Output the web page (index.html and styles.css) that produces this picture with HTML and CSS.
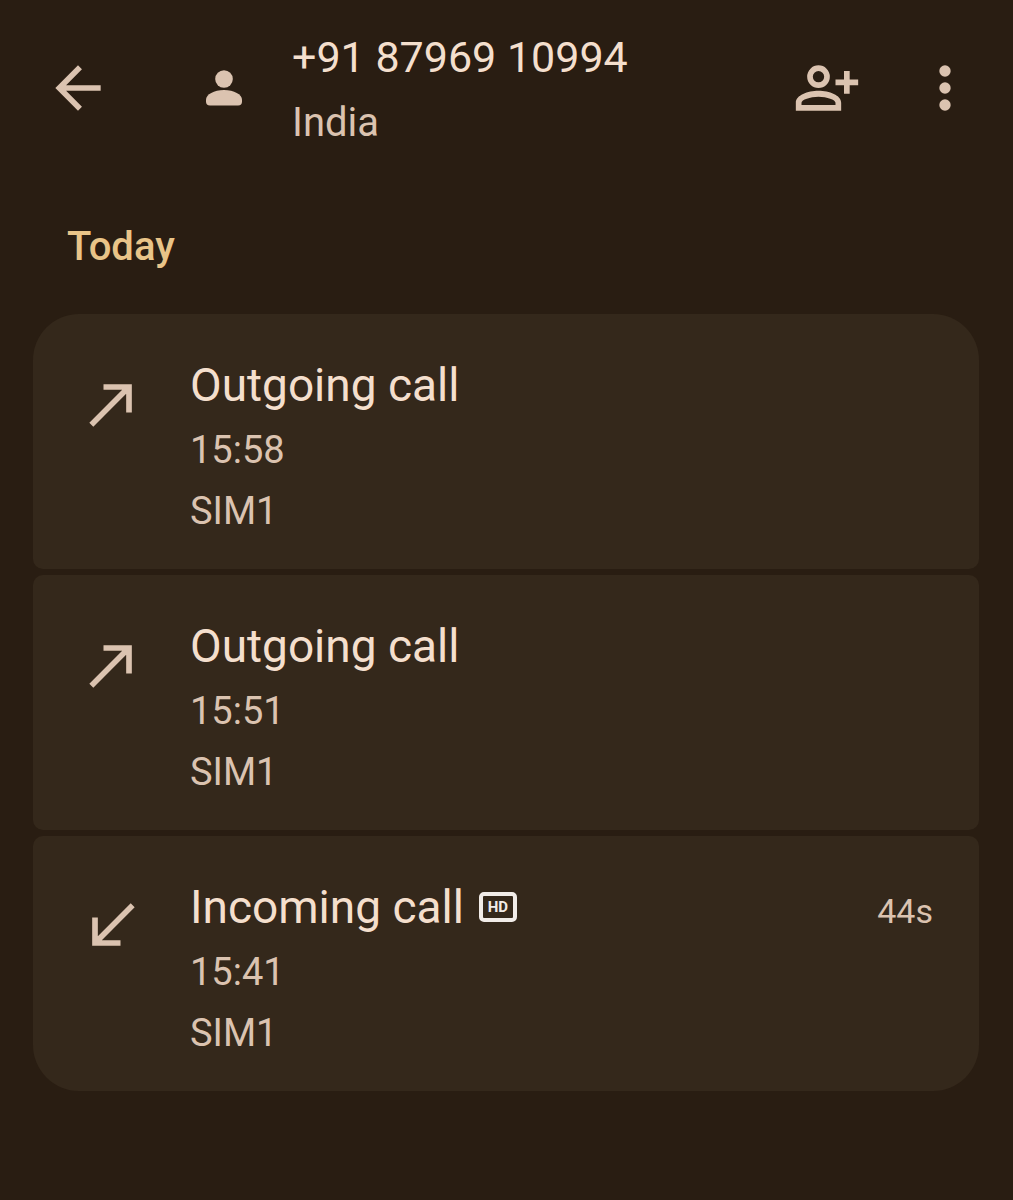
FILE: index.html
```html
<!DOCTYPE html>
<html lang="en">
  <head>
    <meta charset="UTF-8" />
    <meta name="viewport" content="width=device-width, initial-scale=1.0" />
    <title>Call history</title>
    <link rel="stylesheet" href="styles.css">
  </head>
  <body>
    <header class="topbar">
      <button class="icon-button" type="button" aria-label="Back">
        <svg class="icon" viewBox="0 0 24 24"><path d="M7.8 13l5.6 5.6L12 20l-8-8 8-8 1.4 1.4L7.8 11H20v2z" /></svg>
      </button>
      <svg class="avatar" viewBox="0 0 36 36" aria-hidden="true">
        <circle cx="18" cy="9" r="8.8" />
        <path d="M0 29.5C0 24.5 8 20 18 20s18 4.5 18 9.5v2a4 4 0 0 1-4 4H4a4 4 0 0 1-4-4z" />
      </svg>
      <div class="contact">
        <h1 class="title number">+91 87969 10994</h1>
        <p class="detail place">India</p>
      </div>
      <button class="icon-button" type="button" aria-label="Add contact">
        <svg class="icon" viewBox="0 0 24 24">
          <path fill-rule="evenodd" d="M9 4a4 4 0 1 1 0 8 4 4 0 0 1 0-8zm0 2a2 2 0 1 0 0 4 2 2 0 0 0 0-4z" />
          <path fill-rule="evenodd" d="M1 20v-2.8C1 14.6 5.2 13 9 13s8 1.6 8 4.2V20zm2-2h12v-.8C15 16.2 12 15.1 9 15.1S3 16.2 3 17.2z" />
          <path d="M18 6h2v3h3v2h-3v3h-2v-3h-3V9h3z" />
        </svg>
      </button>
      <button class="icon-button" type="button" aria-label="More options">
        <svg class="icon" viewBox="0 0 24 24"><circle cx="12" cy="6" r="2" /><circle cx="12" cy="12" r="2" /><circle cx="12" cy="18" r="2" /></svg>
      </button>
    </header>

    <main>
      <h2 class="day">Today</h2>
      <ul class="calls">
        <li class="call">
          <svg class="icon" viewBox="0 0 24 24" aria-hidden="true"><path d="M9 5v2h6.6L4 18.6 5.4 20 17 8.4V15h2V5z" /></svg>
          <div class="info">
            <h3 class="title">Outgoing call</h3>
            <p class="detail">15:58</p>
            <p class="detail">SIM1</p>
          </div>
        </li>
        <li class="call">
          <svg class="icon" viewBox="0 0 24 24" aria-hidden="true"><path d="M9 5v2h6.6L4 18.6 5.4 20 17 8.4V15h2V5z" /></svg>
          <div class="info">
            <h3 class="title">Outgoing call</h3>
            <p class="detail">15:51</p>
            <p class="detail">SIM1</p>
          </div>
        </li>
        <li class="call">
          <svg class="icon" viewBox="0 0 24 24" aria-hidden="true"><path d="M20 5.4L18.6 4 7 15.6V9H5v10h10v-2H8.4z" /></svg>
          <div class="info">
            <div class="heading">
              <h3 class="title">Incoming call</h3>
              <span class="hd">HD</span>
              <span class="duration">44s</span>
            </div>
            <p class="detail">15:41</p>
            <p class="detail">SIM1</p>
          </div>
        </li>
      </ul>
    </main>
  </body>
</html>
```
FILE: styles.css
```css
* {
  box-sizing: border-box;
  margin: 0;
  padding: 0;
}

body {
  font-family: Roboto, sans-serif;
  background-color: #291d12;
  color: #dbc3b0;
}

svg {
  display: block;
  flex-shrink: 0;
  fill: currentColor;
}

.topbar {
  display: flex;
  align-items: center;
  padding: 22px 34px 0 44px;
}

.icon-button {
  border: none;
  background: none;
  color: inherit;
  cursor: pointer;
}

.icon {
  width: 68px;
  height: 68px;
}

.avatar {
  width: 36px;
  height: 36px;
  margin: 0 50px 0 94px;
}

.contact {
  flex: 1;
}

.contact + .icon-button {
  margin-right: 50px;
}

.title {
  font-size: 46px;
  font-weight: 400;
  line-height: 70px;
  color: #f4dfcd;
}

.number {
  font-size: 43px;
}

.detail {
  font-size: 38px;
  line-height: 61px;
}

.place {
  font-size: 40px;
}

.day {
  margin: 63px 67px 37px;
  font-size: 40px;
  font-weight: 500;
  line-height: 61px;
  color: #e9c488;
}

.calls {
  display: flex;
  flex-direction: column;
  gap: 6px;
  margin: 0 34px 0 33px;
  list-style: none;
}

.call {
  display: flex;
  gap: 44px;
  padding: 36px 46px 27px 45px;
  border-radius: 10px;
  background-color: #34281b;
}

.call:first-child {
  border-top-left-radius: 46px;
  border-top-right-radius: 46px;
}

.call:last-child {
  border-bottom-left-radius: 46px;
  border-bottom-right-radius: 46px;
}

.call > .icon {
  margin-top: 20px;
}

.info {
  flex: 1;
}

.heading {
  display: flex;
  align-items: baseline;
}

.hd {
  align-self: center;
  width: 38px;
  margin-left: 15px;
  border: 4px solid #f1ece8;
  border-radius: 5px;
  font-size: 15px;
  font-weight: 700;
  line-height: 22px;
  text-align: center;
  color: #f1ece8;
}

.duration {
  margin-left: auto;
  font-size: 34px;
}
```
